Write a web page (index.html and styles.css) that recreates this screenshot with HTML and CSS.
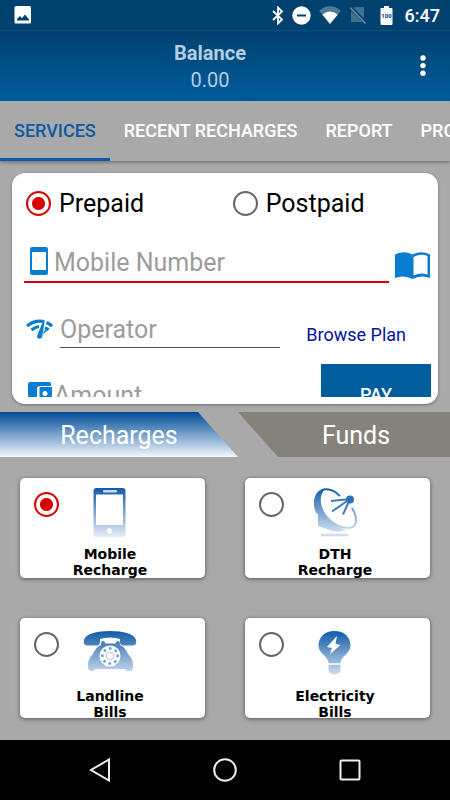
FILE: index.html
```html
<!DOCTYPE html>
<html lang="en">
<head>
<meta charset="utf-8">
<meta name="viewport" content="width=device-width, initial-scale=1">
<title>Recharge</title>
<link rel="stylesheet" href="styles.css">
</head>
<body>
<div class="screen">
  <div class="status-bar">
    <svg class="status-photo" width="18" height="18" viewBox="0 0 18 18" aria-hidden="true"><rect x="0.500" width="16.500" height="17.500" rx="1.500" fill="#fff"/><path d="M3 14.500V13l3-3 2 2.200L11 8.500l4 5v1z" fill="#003f70"/></svg>
    <div class="status-icons">
      <svg width="12" height="19" viewBox="0 0 12 19" fill="none" stroke="#fff" stroke-width="1.800" aria-hidden="true"><path d="M1 5l9 8.500-4 4V1.500l4 4L1 14"/></svg>
      <svg width="19" height="19" viewBox="0 0 19 19" aria-hidden="true"><circle cx="9.500" cy="9.500" r="9.200" fill="#fff"/><path d="M5 9.500h9" stroke="#00416f" stroke-width="2"/></svg>
      <svg width="22" height="18" viewBox="0 0 22 18" aria-hidden="true"><path d="M0 4.500Q11-4 22 4.500L11 18z" fill="#4d7b9b"/><path d="M3.300 8.500Q11 2.500 18.700 8.500L11 18z" fill="#fff"/></svg>
      <svg width="18" height="18" viewBox="0 0 18 18" aria-hidden="true"><path d="M2 6l4-5h9v15H2z" fill="#41708f"/><path d="M1 1l16 16" stroke="#00416f" stroke-width="3.500"/><path d="M1 1.500l15.500 16" stroke="#6a8fa9" stroke-width="1.500"/></svg>
      <svg class="battery" width="13" height="19" viewBox="0 0 13 19" aria-hidden="true"><path d="M1 2h3V0h5v2h2.500q1 0 1 1v15q0 1-1 1H1.500q-1 0-1-1V3q0-1 .5-1z" fill="#fff"/><text x="6.500" y="12" text-anchor="middle" font-size="6" font-weight="700" fill="#00416f">100</text></svg>
    </div>
    <time class="clock">6:47</time>
  </div>

  <header class="app-bar">
    <div class="balance">
      <h1>Balance</h1>
      <p>0.00</p>
    </div>
    <button class="more" type="button" aria-label="More options"><svg width="6" height="22" viewBox="0 0 6 22" fill="#fff"><circle cx="3" cy="3" r="2.700"/><circle cx="3" cy="10.600" r="2.700"/><circle cx="3" cy="18.200" r="2.700"/></svg></button>
  </header>

  <nav class="tabs">
    <a class="tab active" href="#services">SERVICES</a>
    <a class="tab" href="#recent">RECENT RECHARGES</a>
    <a class="tab" href="#report">REPORT</a>
    <a class="tab" href="#profile">PROFILE</a>
  </nav>

  <main>
    <form class="form-card">
      <div class="form-scroll">
        <div class="plans">
          <label><input class="radio" type="radio" name="plan" checked>Prepaid</label>
          <label><input class="radio" type="radio" name="plan">Postpaid</label>
        </div>
        <div class="row number-row">
          <label class="field number-field">
            <svg width="18" height="28" viewBox="0 0 18 28" aria-hidden="true"><path fill-rule="evenodd" fill="#087dd2" d="M2 0h14q2 0 2 2v24q0 2-2 2H2q-2 0-2-2V2Q0 0 2 0zm0 5v18h14V5z"/></svg>
            <input type="tel" placeholder="Mobile Number" aria-label="Mobile Number">
          </label>
          <button class="contacts" type="button" aria-label="Contacts"><svg width="35" height="28" viewBox="0 0 35 28"><path fill="#087dd2" fill-rule="evenodd" d="M0 2.500Q9-2 17.500 2.500 26-2 35 2.500V26q-9-3.500-17.500 1Q9 22.500 0 26zm18.500 2.500v18.500q7-3.500 14-1V4Q26 1 18.500 5z"/></svg></button>
        </div>
        <div class="row operator-row">
          <label class="operator-label">
            <svg width="27" height="20" viewBox="0 0 27 20" aria-hidden="true"><g fill="none" stroke="#087dd2" stroke-width="3.200"><path d="M1 7Q8 1 17 2.300M20.500 3.500Q24 5 26 7"/><path d="M5.500 11Q9 7.800 13 7.500M19 8.700q2 .8 3.500 2.300"/></g><path d="M17.500 1l1.300.3-2.500 16q-.7 3-3.200 2.500-2.600-.8-1.800-3.500z" fill="#087dd2"/><path d="M17.800 12.500l1.800-1.700 1.400 1.300-3.700 3z" fill="#087dd2"/></svg>
            <input type="text" placeholder="Operator" aria-label="Operator">
          </label>
          <a class="browse" href="#plans">Browse Plan</a>
        </div>
        <div class="row amount-row">
          <label class="field amount-field">
            <svg width="25" height="25" viewBox="0 0 25 25" aria-hidden="true"><path fill="#087dd2" d="M2 0h19q2 0 2 2v2H12q-3 0-3 3v11q0 3 3 3h11v2q0 2-2 2H2q-2 0-2-2V2Q0 0 2 0z"/><path fill="#087dd2" fill-rule="evenodd" d="M11.500 5H24v14H11.500zm5.500 4a2.500 2.500 0 1 0 .01 0z"/></svg>
            <input type="text" placeholder="Amount" aria-label="Amount">
          </label>
          <button class="pay" type="submit">PAY</button>
        </div>
      </div>
    </form>

    <div class="sections">
      <button class="section recharges" type="button">Recharges</button>
      <button class="section funds" type="button">Funds</button>
    </div>

    <div class="services">
      <label class="service">
        <input class="radio" type="radio" name="service" checked>
        <svg viewBox="0 0 54 50" aria-hidden="true">
          <defs><linearGradient id="fade" gradientUnits="userSpaceOnUse" x1="0" y1="0" x2="0" y2="50"><stop offset="0" stop-color="#105ba6"/><stop offset=".45" stop-color="#759fcd"/><stop offset="1" stop-color="#e9f1fa"/></linearGradient></defs>
          <path fill="url(#fade)" fill-rule="evenodd" d="M13.500 0h26q3 0 3 3v43q0 3-3 3h-26q-3 0-3-3V3q0-3 3-3zm-.5 6.500v30.500h27V6.500z"/><rect x="20" y="2" width="14" height="2.500" rx="1" fill="#c4d9ec"/><circle cx="26.500" cy="43" r="2.700" fill="#fff"/>
        </svg>
        <span>Mobile<br>Recharge</span>
      </label>
      <label class="service">
        <input class="radio" type="radio" name="service">
        <svg viewBox="0 0 54 50" aria-hidden="true">
          <path d="M17 .5Q5 3 6 17q0 6 4 10v11l14 5q8 2 14-1-12-4-20-15Q8 12 17 .5z" fill="url(#fade)"/>
          <path d="M32 8C23-1 12-1 10 8 8 22 25 40 40 40c11 0 9-12 4-20" fill="none" stroke="url(#fade)" stroke-width="2"/>
          <path d="M42 11l-19 2M42 11L24 23.500M42 11l-7 15.500" stroke="#3d7dbb" stroke-width="2"/><circle cx="42" cy="11.500" r="4" fill="#2b73b7"/>
          <path d="M13 47h27" stroke="#cfdff0" stroke-width="2.500"/>
        </svg>
        <span>DTH<br>Recharge</span>
      </label>
      <label class="service bill">
        <input class="radio" type="radio" name="service">
        <svg viewBox="0 0 54 50" aria-hidden="true">
          <path fill="url(#fade)" d="M1 9C2 3 14 0 27 0s25 3 26 9c1 4-1 5.500-4 5.500h-9q-2.500 0-3-3V8q-10-3-20 0v3.500q-.5 3-3 3H5c-3 0-5-1.500-4-5.500z"/>
          <path fill="url(#fade)" d="M20 10q-2 0-2 4-5 2-8 9-6 6-5 13 0 3 3 4h2l2-2h30l2 2h3q3-1 3-4 1-7-5-13-3-7-8-9 0-4-2-4t-2.500 2.500h-10Q22 10 20 10z"/>
          <circle cx="27" cy="25" r="10.500" fill="#fff"/><circle cx="27" cy="25" r="7.600" fill="none" stroke="#6f9bc9" stroke-width="2.800" stroke-linecap="round" stroke-dasharray=".1 5.869"/><circle cx="27" cy="25" r="4" fill="none" stroke="#b8cee4"/>
        </svg>
        <span>Landline<br>Bills</span>
      </label>
      <label class="service bill">
        <input class="radio" type="radio" name="service">
        <svg viewBox="0 0 54 50" aria-hidden="true">
          <path fill="url(#fade)" d="M26.500 0C17 0 10.500 6 10.500 14.500c0 8 9 10 10 17v7q0 4.500 6 5 6-.5 6-5v-7c1-7 10-9 10-17C42.500 6 36 0 26.500 0z"/><path d="M29 5L19 16l5 1-2 6 10.500-9-5-1z" fill="#fff"/><path d="M20 33h13" stroke="#fff" stroke-width="1.300"/>
        </svg>
        <span>Electricity<br>Bills</span>
      </label>
    </div>
  </main>

  <nav class="system-nav">
    <button type="button" aria-label="Back"><svg width="24" height="26" viewBox="0 0 24 26"><path d="M21 2.500v21L3 13z"/></svg></button>
    <button type="button" aria-label="Home"><svg width="26" height="26" viewBox="0 0 26 26"><circle cx="13" cy="13" r="10.800"/></svg></button>
    <button type="button" aria-label="Recent apps"><svg width="24" height="24" viewBox="0 0 24 24"><rect x="2.500" y="2.500" width="19" height="19" rx="1"/></svg></button>
  </nav>
</div>
</body>
</html>
```
FILE: styles.css
```css
* { box-sizing: border-box; }
body {
  margin: 0;
  background: #a9a9a9;
  font-family: Roboto, "Liberation Sans", sans-serif;
}
svg { display: block; flex: none; }
button { border: 0; padding: 0; background: none; font: inherit; color: inherit; }
a { color: inherit; text-decoration: none; }
h1, p { margin: 0; }

.screen {
  display: flex;
  flex-direction: column;
  min-height: 100vh;
  overflow: hidden;
}

.status-bar {
  display: flex;
  align-items: center;
  height: 30px;
  padding: 0 10px 0 14px;
  background: #00426f;
  color: #fff;
}
.status-icons {
  display: flex;
  align-items: center;
  gap: 8px;
  margin-left: auto;
}
.battery { margin-left: 5px; }
.clock { margin-left: 12px; font-size: 18px; font-weight: 500; }

.app-bar {
  display: flex;
  align-items: center;
  justify-content: center;
  position: relative;
  height: 71px;
  padding-top: 2px;
  border-top: 1px solid #004f80;
  background: linear-gradient(#00416e, #005d9e);
  color: #b3cde1;
  font-size: 20px;
  line-height: 27px;
  text-align: center;
}
.balance { padding-right: 30px; }
.app-bar h1 { font-size: 20px; font-weight: 700; }
.more { position: absolute; right: 24px; top: 24px; }

.tabs {
  display: flex;
  position: relative;
  height: 60px;
  background: #a9a9a9;
  box-shadow: 0 1px 4px rgba(0, 0, 0, .4);
  color: #fff;
  font-size: 18px;
  font-weight: 500;
}
.tab {
  flex: none;
  padding: 3px 14px 0;
  line-height: 54px;
}
.tab.active { color: #0c5aa5; border-bottom: 3px solid #0c5aa5; }

main { flex: 1; padding-top: 12px; }

.form-card {
  margin: 0 12px;
  padding: 10px 7px 7px 12px;
  border-radius: 13px;
  background: #fff;
  box-shadow: 0 1px 3px rgba(0, 0, 0, .35);
}
.form-scroll { height: 214px; overflow: hidden; }
.plans { display: grid; grid-template-columns: 32fr 31fr; }
.plans label {
  display: flex;
  align-items: center;
  gap: 8px;
  height: 40px;
  padding-left: 2px;
  font-size: 25px;
}
.radio {
  appearance: none;
  flex: none;
  width: 25px;
  height: 25px;
  margin: 0;
  border: 2px solid #666;
  border-radius: 50%;
  background: #fff;
}
.radio:checked {
  border-color: #d80000;
  background: radial-gradient(circle, #d80000 6px, #fff 7px);
}
.form-scroll input:not(.radio) {
  flex: 1;
  min-width: 0;
  padding: 2px 0 0;
  border: 0;
  outline: 0;
  background: none;
  font: 25px Roboto, sans-serif;
}
input::placeholder { color: #9c9c9c; opacity: 1; }
.row { display: flex; }
.field { display: flex; align-items: center; flex: 1; min-width: 0; }
.number-row { gap: 6px; padding: 18px 1px 0 0; }
.number-field {
  gap: 6px;
  height: 42px;
  padding-left: 6px;
  border-bottom: 2px solid #d80000;
}
.contacts { padding-top: 8px; }
.operator-row { gap: 26px; padding-top: 26px; }
.operator-label { display: flex; align-items: center; flex: 1; min-width: 0; gap: 7px; padding-left: 2px; }
.form-scroll .operator-label input { height: 39px; border-bottom: 1px solid #555; }
.browse { flex: none; padding: 15px 25px 0 0; color: #0012a8; font-size: 18px; }
.amount-row { gap: 20px; padding-top: 16px; }
.amount-field { gap: 1px; height: 60px; padding-left: 4px; }
.pay {
  width: 110px;
  height: 60px;
  background: #005d9e;
  color: #fff;
  font-size: 18px;
  font-weight: 500;
}

.sections {
  display: grid;
  grid-template-columns: 238fr 212fr;
  padding-top: 8px;
  color: #fff;
  font-size: 25px;
}
.section { height: 45px; padding-top: 2px; }
.recharges {
  background: linear-gradient(#004c9a, #f2f6fb);
  clip-path: polygon(0 0, calc(100% - 40px) 0, 100% 100%, 0 100%);
}
.funds {
  padding-left: 24px;
  background: #85827a;
  clip-path: polygon(0 0, 100% 0, 100% 100%, 40px 100%);
}

.services {
  display: grid;
  grid-template-columns: 1fr 1fr;
  gap: 40px;
  padding: 21px 20px;
}
.service {
  display: flex;
  flex-direction: column;
  align-items: center;
  position: relative;
  height: 100px;
  padding: 10px 5px 0 0;
  overflow: hidden;
  border-radius: 5px;
  background: #fff;
  box-shadow: 0 1px 4px rgba(0, 0, 0, .5);
  font: 700 14px/16px "DejaVu Sans", sans-serif;
  text-align: center;
}
.service .radio { position: absolute; left: 14px; top: 14px; }
.service svg { width: 54px; height: 50px; }
.service span { padding-top: 8px; }
.bill { padding-top: 13px; }
.bill span { padding-top: 7px; }

.system-nav {
  display: flex;
  justify-content: center;
  height: 60px;
  background: #000;
}
.system-nav button { display: flex; align-items: center; justify-content: center; width: 125px; }
.system-nav svg { fill: none; stroke: #eee; stroke-width: 2; }
```
